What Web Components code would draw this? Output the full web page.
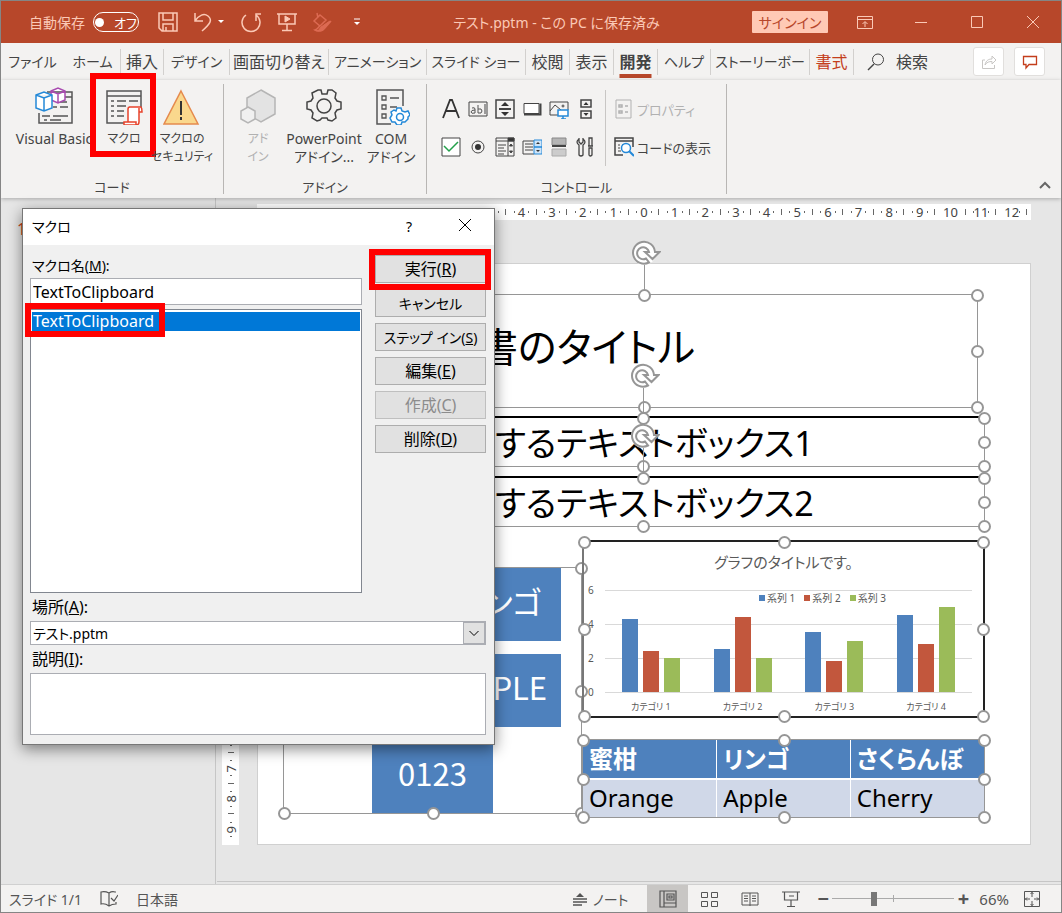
<!DOCTYPE html>
<html lang="ja">
<head>
<meta charset="utf-8">
<title>テスト.pptm</title>
<style>
  html, body { margin: 0; height: 100%; }
  body {
    font-family: "Noto Sans", "Noto Sans CJK JP", sans-serif;
    font-size: 14px;
    font-feature-settings: "palt";
    color: #444;
  }
</style>
</head>
<body>
<app-window>
  <title-bar slot="title" heading="テスト.pptm - この PC に保存済み"></title-bar>
  <ribbon-tabs slot="tabs"></ribbon-tabs>
  <ribbon-panel slot="ribbon">
    <ribbon-group label="コード" style="--columns: 84px 56px 60px; width: 222px">
      <ribbon-button icon="vb">Visual Basic</ribbon-button>
      <ribbon-button icon="macro" compact marked>マクロ</ribbon-button>
      <ribbon-button icon="warning" compact>マクロの<br>セキュリティ</ribbon-button>
    </ribbon-group>
    <ribbon-group label="アドイン" style="--columns: 42px 90px 44px; width: 202px">
      <ribbon-button icon="addin" compact disabled>アド<br>イン</ribbon-button>
      <ribbon-button icon="gear">PowerPoint<br>アドイン...</ribbon-button>
      <ribbon-button icon="com">COM<br>アドイン</ribbon-button>
    </ribbon-group>
    <ribbon-group label="コントロール" style="--columns: 1fr; width: 299px">
      <control-palette></control-palette>
    </ribbon-group>
  </ribbon-panel>
  <work-area slot="work"></work-area>
  <status-bar slot="status"></status-bar>
  <macro-dialog slot="dialog"></macro-dialog>
</app-window>

<script>
const ICONS = {
  save: [20, `<path d="M1 1h18v18H4l-3-3zM5 1v7h10V1M5 19v-7h10v7M8 19v-4" stroke-width="1.500"/>`],
  undo: [20, `<path d="M2 1v8h8M2 9C6 3 11 1 15 4c5 4 2 8-6 15" stroke-width="1.500"/>`],
  redo: [22, `<path d="M6 4a9 9 0 1 0 10 0M16 10V3h5" stroke-width="1.500"/>`],
  show: [20, `<path d="M0 2h20M2 2v10h16V2M10 12v6M5 18.500h10" stroke-width="1.500"/><path d="M8 4v6l5-3z" fill="currentColor"/>`],
  brush: [20, `<path d="M5 1l1 5M2 9l6-6 6 5-6 6zM9 16l8-6M8 14c-2 1-2 3-5 4 4 2 8 1 9-1l7-8" stroke-width="1.500"/><path d="M9 15l9-6-7 9-5 1z" fill="currentColor"/>`],
  more: [8, `<path d="M1 1h6" stroke="#fff"/><path d="M1 4h6l-3 3z" fill="#fff" stroke="none"/>`],
  caret: [8, `<path d="M1 2h6l-3 3z" fill="#fff" stroke="none"/>`],
  ribbonopt: [16, `<path d="M.5 2.500h15v12H.5zM.5 5.500h15M8 13V8M5.500 10L8 7.500l2.500 2.500"/>`],
  min: [14, `<path d="M1 7.500h12"/>`],
  max: [14, `<path d="M1.500 1.500h11v11h-11z"/>`],
  close: [14, `<path d="M1 1l12 12M13 1L1 13"/>`],
  search: [20, `<circle cx="12" cy="7.500" r="5.500"/><path d="M8 12l-6 6" stroke-width="1.500"/>`],
  share: [16, `<path d="M4 6H1.500v8.500h12V11M4 11c1-5 4-6 7-6V2l4 4-4 4V7.500C8 7.500 6 8 4 11z"/>`],
  comment: [16, `<path d="M1.500 2.500h13v8H7l-3 3.500v-3.500H1.500z" stroke-width="1.300"/>`],
  vb: [38, `<path d="M12 5h25v31H4V26M18 10h19M23 15h9M18 20h4M25 20h8M7 29h8M18 29h15M9 33h3M15 33h11" stroke="#555" stroke-width="1.500"/>
    <path d="M16 4l7-3 7 3v9l-7 3-7-3zM16 4l7 3 7-3M23 7v9" fill="#fff" stroke="#a84bb0" stroke-width="1.500"/>
    <path d="M1 8l8-3 8 3v13l-8 3-8-3zM1 8l8 3 8-3M9 11v13" fill="#fff" stroke="#2489d8" stroke-width="1.500"/>`],
  macro: [38, `<path d="M20 36H2V4h34v17M2 9h34" stroke="#555" stroke-width="1.500"/>
    <path d="M6 14h3M12 14h9M24 14h9M6 19h3M12 19h9M6 24h3M12 24h7M6 29h3M12 29h7" stroke="#555" stroke-width="1.300"/>
    <path d="M24 20h12q1 1 1 5h-3v10q0 3-3 3H19v-3h4V22q0-2 2-2M23 35h8v3M34 25v-4" fill="#fff" stroke="#e8432b" stroke-width="1.500"/>`],
  warning: [38, `<path d="M18 4l17 33H1z" fill="#fad88d" stroke="#e58a4d" stroke-width="1.500"/><path d="M18 14v14M18 30v3" stroke="#333" stroke-width="2"/>`],
  addin: [38, `<path d="M22 3l14 8v16l-14 8-14-8V11z" fill="#e3e3e3" stroke="#b5b5b5" stroke-width="1.500"/><path d="M9 20l7 4v8l-7 4-7-4v-8z" fill="#f0f0f0" stroke="#b5b5b5" stroke-width="1.500"/>`],
  gear: [38, `<path d="M13 3h3l1 4h5l1-4h4l4 3-1 5 2 3 4 1v7l-4 1-2 3 1 5-4 3-4-1-1-2h-5l-2 2-3 1-5-3 1-5-2-3-4-1v-7l4-1 2-3-1-5z" stroke="#444" stroke-width="1.500"/><circle cx="19" cy="19" r="7" stroke="#444" stroke-width="1.500"/>`],
  com: [38, `<path d="M19 37H5V3h26v16" stroke="#555" stroke-width="1.500"/><path d="M10 9h4v4h-4zM10 18h4v4h-4zM10 27h4v4h-4zM18 11h9M18 20h7" stroke="#555" stroke-width="1.300"/>
    <path d="M25 21h4l1 3 3 1 3-1 2 4-2 2 0 2-3 3-3 0-1 3h-4l-2-3-3 0-2-4 2-3-1-3 3-2 2 1z" fill="#fff" stroke="#2489d8" stroke-width="1.500"/><circle cx="28" cy="30" r="3.500" stroke="#2489d8" stroke-width="1.500"/>`],
  label: [20, `<path d="M2 19L9 1h2l7 18M5 12h10" stroke="#333" stroke-width="1.800"/>`],
  textbox: [20, `<path d="M1 3h18v14H1zM17 5v10"/><path d="M4 9q3-1 3 1v4q-4 1-4-1 0-2 4-2M10 6v8q4 1 4-2t-4-2" stroke="#555"/>`],
  spin: [20, `<path d="M1 1h18v18H1z" stroke-width="1.500"/><path d="M4 10h12" stroke-width="2"/><path d="M10 3l4 4H6zM10 17l4-4H6z" fill="#333" stroke="none"/>`],
  cmdbutton: [20, `<path d="M2 4.500h15v10H2z" fill="#fff"/><path d="M2 15.500h16.500V4.500" stroke-width="2"/>`],
  image: [20, `<path d="M9 16H1V3h18v8M1 12l5-6 6 5"/><circle cx="14" cy="7" r="1"/><path d="M9 11h10v6H9zM12 20h5M14 17v3" fill="#fff" stroke="#2489d8" stroke-width="1.500"/>`],
  scroll: [20, `<path d="M5 1h10v7H5zM5 12h10v7H5z" stroke-width="1.500"/><path d="M10 3l2.500 3h-5zM10 17l2.500-3h-5z" fill="#333" stroke="none"/>`],
  check: [20, `<path d="M1 1h18v18H1z" fill="#fff"/><path d="M3 9l5 5 9-9" stroke="#22a04a" stroke-width="1.500"/>`],
  radio: [20, `<circle cx="10" cy="10" r="6"/><circle cx="10" cy="10" r="3" fill="#333" stroke="none"/>`],
  listbox: [20, `<path d="M1 1h18v18H1zM1 4h18M13 4v15M3 8h8M3 11h6M3 14h8M3 17h6"/><path d="M13 1h6v3h-6zM14.500 9h3l-1.500-2zM14.500 14h3l-1.500 2z" fill="#333"/>`],
  combobox: [20, `<path d="M12 4H1v13h11M3 7h8M3 10h8M3 13h8"/><path d="M12 3h8v7h-8zM12 10h8v7h-8z" fill="#cfe5f8" stroke="#2489d8"/><path d="M16 5l2 2h-4zM16 15l2-2h-4z" fill="#333" stroke="none"/>`],
  toggle: [20, `<path d="M3 1h14v7H3z" fill="#b5b5b5" stroke="#888"/><path d="M3 9h14" stroke-width="2"/><path d="M3 12h14v7H3z" fill="#ccc" stroke="#aaa"/>`],
  tools: [20, `<path d="M3 1v4l2 2 2-2V1M3 2q-4 3 0 6v10q2 2 4 0V8q4-3 0-6M13 1h3v8h-3zM12 9h5M13 11v7q1 2 3 0v-7z" stroke-width="1.300"/>`],
  props: [20, `<path d="M2 1h15v18H2z"/><path d="M5 6h3v2H5zM5 12h3v2H5zM11 7h3M11 13h3" stroke-width="1.500"/>`],
  viewcode: [20, `<path d="M9 18H1V1h18v9M1 4h18" stroke="#444" stroke-width="1.500"/><path d="M4 8h2M8 8h3M4 11h2M4 14h3" stroke="#444"/><circle cx="12" cy="11" r="4.500" fill="#fff" stroke="#2489d8" stroke-width="1.500"/><path d="M15 14l5 5" stroke="#2489d8" stroke-width="2"/>`],
  up: [12, `<path d="M1 9l5-5 5 5" stroke-width="2"/>`],
  down: [12, `<path d="M1.500 4L6 8.500 10.500 4"/>`],
  proof: [18, `<path d="M9 3v13M9 3Q5 1 1 2v12q4-1 8 2M9 3q3-2 6-1h1M9 16q3-2 7-2v-2M11 8l3 3 4-6" stroke-width="1.200"/>`],
  notes: [14, `<path d="M7 1l4 4H3z" fill="currentColor" stroke="none"/><path d="M0 7h14M0 10h14M0 13h9" stroke-width="1.300"/>`],
  normal: [18, `<path d="M1 1h16v16H1zM5 1v16M5 13h12M8 4h7v6H8zM10 6h3v2h-3z" stroke-width="1.200"/>`],
  sorter: [18, `<path d="M1.500 2.500h6v5h-6zM11.500 2.500h6v5h-6zM1.500 11.500h6v5h-6zM11.500 11.500h6v5h-6z"/>`],
  reading: [18, `<path d="M9 3v13M9 3H1v12h8M9 3h8v12H9M3 6h4M3 8.500h4M3 11h4M11 6h4M11 8.500h4M11 11h4"/>`],
  present: [18, `<path d="M0 2h18M2.500 2v8h13V2M9 10v6M5 16.500h8M7 6h5" stroke-width="1.200"/>`],
  fit: [18, `<path d="M1.500 1.500h15v15h-15zM9 2v5M9 11v5M2 9h5M11 9h5M7.500 4L9 2.500 10.500 4M7.500 14L9 15.500l1.500-1.500M4 7.500L2.500 9 4 10.500M14 7.500L15.500 9 14 10.500"/>`],
  rotate: [30, `<circle cx="13" cy="15" r="12" fill="#fff" stroke="none"/><path d="M24 14a11 11 0 1 0-6 10.500l-3-4a6 6 0 1 1 3-6.500h-4l7.500 7 7-7z" fill="#fff" stroke="#969696" stroke-width="2"/>`],
};

class BaseElement extends HTMLElement {
  constructor() {
    super();
    this.attachShadow({ mode: "open" });
    this.shadowRoot.append(this.constructor.template.content.cloneNode(true));
  }

  static define(name, html) {
    this.template = document.createElement("template");
    this.template.innerHTML = html;
    customElements.define(name, this);
  }
}

class UiIcon extends BaseElement {
  static observedAttributes = ["name"];

  attributeChangedCallback() {
    const [size, shapes] = ICONS[this.getAttribute("name")];
    this.shadowRoot.querySelector("div").innerHTML =
      `<svg width="${size}" height="${size}" viewBox="0 0 ${size} ${size}" fill="none" stroke="currentColor" aria-hidden="true">${shapes}</svg>`;
  }
}
UiIcon.define("ui-icon", `
  <style>
    :host { display: inline-flex; flex: none; }
    svg { display: block; }
  </style>
  <div></div>
`);

class AppWindow extends BaseElement {}
AppWindow.define("app-window", `
  <style>
    :host {
      display: flex;
      flex-direction: column;
      position: relative;
      box-sizing: border-box;
      min-height: 100vh;
      border: 1px solid #858585;
      background: #f3f2f1;
      overflow: hidden;
    }
    main { flex: 1; display: grid; }
  </style>
  <slot name="title"></slot>
  <slot name="tabs"></slot>
  <slot name="ribbon"></slot>
  <main><slot name="work"></slot></main>
  <slot name="status"></slot>
  <slot name="dialog"></slot>
`);

class TitleBar extends BaseElement {
  connectedCallback() {
    this.shadowRoot.querySelector("h1").textContent = this.getAttribute("heading");
  }
}
TitleBar.define("title-bar", `
  <style>
    :host {
      display: flex;
      align-items: center;
      height: 42px;
      background: #b7472a;
      color: #fbc9b6;
    }
    button {
      display: inline-flex;
      align-items: center;
      justify-content: center;
      border: 0;
      padding: 0;
      background: none;
      color: inherit;
      font: inherit;
    }
    .autosave { display: flex; align-items: center; gap: 8px; padding-left: 28px; }
    .switch {
      gap: 10px;
      box-sizing: border-box;
      width: 46px;
      height: 20px;
      border: 1px solid #fff;
      border-radius: 10px;
      color: #fff;
      font-size: 13px;
    }
    .switch i { width: 9px; height: 9px; border-radius: 50%; background: #fff; }
    .quick { display: flex; align-items: center; gap: 15px; padding-left: 19px; }
    .quick .split { gap: 4px; }
    .quick button:last-child { margin-left: 6px; }
    .dim { color: #dc6a52; }
    h1 { flex: 1; margin: 0; font-size: 14px; font-weight: 400; text-align: center; white-space: nowrap; }
    .signin {
      width: 76px;
      height: 22px;
      background: #ffc9b5;
      color: #b7472a;
      border-radius: 1px;
    }
    .window { display: flex; gap: 16px; padding: 0 8px 0 17px; }
    .window button { width: 40px; height: 32px; }
  </style>
  <div class="autosave">
    <span id="save">自動保存</span>
    <button class="switch" role="switch" aria-checked="false" aria-labelledby="save"><i></i>オフ</button>
  </div>
  <div class="quick">
    <button aria-label="上書き保存"><ui-icon name="save"></ui-icon></button>
    <button class="split" aria-label="元に戻す"><ui-icon name="undo"></ui-icon><ui-icon name="caret"></ui-icon></button>
    <button aria-label="やり直し"><ui-icon name="redo"></ui-icon></button>
    <button aria-label="最初から開始"><ui-icon name="show"></ui-icon></button>
    <button class="dim" aria-label="書式"><ui-icon name="brush"></ui-icon></button>
    <button aria-label="カスタマイズ"><ui-icon name="more"></ui-icon></button>
  </div>
  <h1></h1>
  <button class="signin">サインイン</button>
  <div class="window">
    <button aria-label="リボンの表示オプション"><ui-icon name="ribbonopt"></ui-icon></button>
    <button aria-label="最小化"><ui-icon name="min"></ui-icon></button>
    <button aria-label="最大化"><ui-icon name="max"></ui-icon></button>
    <button aria-label="閉じる"><ui-icon name="close"></ui-icon></button>
  </div>
`);

class RibbonTabs extends BaseElement {}
RibbonTabs.define("ribbon-tabs", `
  <style>
    :host { display: flex; align-items: center; height: 37px; padding-right: 16px; }
    nav {
      display: grid;
      grid-template-columns: 64px 56px 43px 66px 99px 98px 99px 44px 44px 44px 53px 99px 44px;
      height: 26px;
    }
    a {
      display: flex;
      align-items: center;
      justify-content: center;
      border-right: 1px solid #d2d0ce;
      color: #444;
      font-size: 14px;
      line-height: 24px;
      text-decoration: none;
      white-space: nowrap;
    }
    a:first-child { border-color: transparent; }
    a.kanji { font-size: 16px; }
    a[aria-current] { font-weight: 700; text-decoration: underline 4px #b7472a; text-underline-offset: 6px; }
    a.context { color: #c43e1c; }
    .search {
      display: flex;
      align-items: center;
      gap: 10px;
      flex: 1;
      padding-left: 12px;
      border: 0;
      background: none;
      color: #444;
      font: inherit;
      font-size: 16px;
      line-height: 24px;
    }
    .side { display: flex; gap: 10px; }
    .side button {
      display: grid;
      place-items: center;
      width: 31px;
      height: 29px;
      padding: 0;
      border: 1px solid #e1dfdd;
      border-radius: 3px;
      background: #fff;
      color: #c43e1c;
    }
    .side button:disabled { color: #c8c6c4; }
  </style>
  <nav>
    <a href="#file">ファイル</a>
    <a href="#home">ホーム</a>
    <a href="#insert" class="kanji">挿入</a>
    <a href="#design">デザイン</a>
    <a href="#transitions" class="kanji">画面切り替え</a>
    <a href="#animations">アニメーション</a>
    <a href="#slideshow">スライド ショー</a>
    <a href="#review" class="kanji">校閲</a>
    <a href="#view" class="kanji">表示</a>
    <a href="#developer" class="kanji" aria-current="page">開発</a>
    <a href="#help">ヘルプ</a>
    <a href="#storyboard">ストーリーボー</a>
    <a href="#format" class="kanji context">書式</a>
  </nav>
  <button class="search"><ui-icon name="search"></ui-icon>検索</button>
  <div class="side">
    <button disabled aria-label="共有"><ui-icon name="share"></ui-icon></button>
    <button aria-label="コメント"><ui-icon name="comment"></ui-icon></button>
  </div>
`);

class RibbonPanel extends BaseElement {}
RibbonPanel.define("ribbon-panel", `
  <style>
    :host {
      display: flex;
      height: 118px;
      position: relative;
      z-index: 1;
      box-shadow: 0 1px 4px #0004;
    }
    .collapse {
      margin: auto 10px 4px auto;
      padding: 0;
      border: 0;
      background: none;
      color: #666;
    }
  </style>
  <slot></slot>
  <button class="collapse" aria-label="リボンを折りたたむ"><ui-icon name="up"></ui-icon></button>
`);

class RibbonGroup extends BaseElement {
  connectedCallback() {
    this.shadowRoot.querySelector("footer").textContent = this.getAttribute("label");
  }
}
RibbonGroup.define("ribbon-group", `
  <style>
    :host {
      display: flex;
      flex-direction: column;
      margin: 4px 0;
      border-right: 1px solid #b8b6b4;
    }
    section {
      display: grid;
      grid-template-columns: var(--columns);
      justify-content: center;
      flex: 1;
    }
    footer { font-size: 13px; line-height: 14px; text-align: center; }
  </style>
  <section><slot></slot></section>
  <footer></footer>
`);

class RibbonButton extends BaseElement {
  connectedCallback() {
    this.shadowRoot.querySelector("ui-icon").setAttribute("name", this.getAttribute("icon"));
    this.shadowRoot.querySelector("button").disabled = this.hasAttribute("disabled");
  }
}
RibbonButton.define("ribbon-button", `
  <style>
    :host { display: block; position: relative; }
    button {
      display: flex;
      flex-direction: column;
      align-items: center;
      gap: 5px;
      width: 100%;
      padding: 3px 0 0;
      border: 0;
      background: none;
      color: #444;
      font: inherit;
      line-height: 18px;
    }
    span { white-space: nowrap; }
    :host([compact]) button { font-size: 12px; }
    button:disabled { color: #b1b1b1; }
    .mark { display: none; }
    /* red frame that points at the command to press */
    :host([marked]) .mark {
      display: block;
      position: absolute;
      inset: -11px -4px 23px -6px;
      border: 6px solid #f00;
    }
  </style>
  <button><ui-icon></ui-icon><span><slot></slot></span></button>
  <div class="mark"></div>
`);

class ControlPalette extends BaseElement {}
ControlPalette.define("control-palette", `
  <style>
    :host { display: flex; align-items: flex-start; padding: 6px 0 0 10px; }
    button { display: flex; align-items: center; border: 0; padding: 0; background: none; color: #444; font: inherit; font-size: 13px; }
    .tools { display: grid; grid-template-columns: repeat(6, 27px); grid-auto-rows: 38px; }
    .tools button { justify-content: center; }
    .side {
      display: grid;
      grid-auto-rows: 38px;
      border-left: 1px solid #c8c6c4;
      margin-left: 6px;
      padding-left: 8px;
    }
    .side button { gap: 3px; white-space: nowrap; }
    button:disabled { color: #b1b1b1; }
  </style>
  <div class="tools">
    <button aria-label="ラベル"><ui-icon name="label"></ui-icon></button>
    <button aria-label="テキスト ボックス"><ui-icon name="textbox"></ui-icon></button>
    <button aria-label="スピン"><ui-icon name="spin"></ui-icon></button>
    <button aria-label="コマンド"><ui-icon name="cmdbutton"></ui-icon></button>
    <button aria-label="イメージ"><ui-icon name="image"></ui-icon></button>
    <button aria-label="スクロール バー"><ui-icon name="scroll"></ui-icon></button>
    <button aria-label="チェック ボックス"><ui-icon name="check"></ui-icon></button>
    <button aria-label="オプション"><ui-icon name="radio"></ui-icon></button>
    <button aria-label="リスト ボックス"><ui-icon name="listbox"></ui-icon></button>
    <button aria-label="コンボ ボックス"><ui-icon name="combobox"></ui-icon></button>
    <button aria-label="トグル"><ui-icon name="toggle"></ui-icon></button>
    <button aria-label="その他"><ui-icon name="tools"></ui-icon></button>
  </div>
  <div class="side">
    <button disabled><ui-icon name="props"></ui-icon>プロパティ</button>
    <button><ui-icon name="viewcode"></ui-icon>コードの表示</button>
  </div>
`);

class RulerScale extends BaseElement {
  connectedCallback() {
    const max = Number(this.getAttribute("max"));
    for (let n = -max; n <= max; n++) {
      const cell = document.createElement("div");
      cell.innerHTML = `<span>${Math.abs(n)}</span>`;
      this.shadowRoot.append(cell);
    }
  }
}
RulerScale.define("ruler-scale", `
  <style>
    :host {
      --tick: linear-gradient(#666, #666);
      display: flex;
      padding: 0 4px;
      background: #fff;
      color: #444;
      font-size: 13px;
      line-height: 16px;
    }
    div {
      display: flex;
      flex: 1;
      align-items: center;
      justify-content: center;
      min-width: 0;
      background:
        var(--tick) 25% 50% / 1px 2px no-repeat,
        var(--tick) 75% 50% / 1px 2px no-repeat,
        var(--tick) 100% 50% / 1px 6px no-repeat;
    }
    span { background: #fff; }
    :host([vertical]) { flex-direction: column; padding: 0; }
    :host([vertical]) div {
      min-height: 0;
      background:
        var(--tick) 50% 25% / 2px 1px no-repeat,
        var(--tick) 50% 75% / 2px 1px no-repeat,
        var(--tick) 50% 100% / 6px 1px no-repeat;
    }
    :host([vertical]) div:last-child { background-size: 2px 1px, 2px 1px, 0 0; }
    :host([vertical]) span { writing-mode: vertical-rl; transform: rotate(180deg); }
  </style>
`);

class SlideFrame extends BaseElement {}
SlideFrame.define("slide-frame", `
  <style>
    :host { display: block; position: absolute; box-sizing: border-box; border: 1px solid #969696; }
    .h {
      position: absolute;
      box-sizing: border-box;
      width: 13px;
      height: 13px;
      margin: -6px;
      border: 2px solid #969696;
      border-radius: 50%;
      background: #fff;
    }
    .n { left: 50%; top: 0; }
    .s { left: 50%; top: 100%; }
    .e { left: 100%; top: 50%; }
    .w { left: 0; top: 50%; }
    .nw { left: 0; top: 0; }
    .ne { left: 100%; top: 0; }
    .sw { left: 0; top: 100%; }
    .se { left: 100%; top: 100%; }
    .rotate { display: none; }
    :host([rotatable]) .rotate {
      display: flex;
      flex-direction: column;
      align-items: center;
      position: absolute;
      left: 50%;
      bottom: 100%;
      width: 26px;
      margin-left: -13px;
    }
    .rotate ui-icon { align-self: flex-start; }
    .rotate i { width: 1px; height: 30px; margin-top: -3px; background: #969696; }
  </style>
  <slot></slot>
  <div class="rotate"><ui-icon name="rotate"></ui-icon><i></i></div>
  <i class="h nw"></i><i class="h n"></i><i class="h ne"></i><i class="h e"></i>
  <i class="h se"></i><i class="h s"></i><i class="h sw"></i><i class="h w"></i>
`);

class BarChart extends BaseElement {
  data = [
    ["カテゴリ 1", 4.3, 2.4, 2],
    ["カテゴリ 2", 2.5, 4.4, 2],
    ["カテゴリ 3", 3.5, 1.8, 3],
    ["カテゴリ 4", 4.5, 2.8, 5],
  ];

  connectedCallback() {
    const plot = this.shadowRoot.querySelector(".plot");
    const names = this.shadowRoot.querySelector(".names");
    this.data.forEach(([name, ...values]) => {
      const group = document.createElement("div");
      values.forEach((value, i) => {
        const bar = document.createElement("i");
        bar.className = "s" + (i + 1);
        bar.style.height = Math.round(value * 17) + "px";
        group.append(bar);
      });
      plot.append(group);
      const label = document.createElement("span");
      label.textContent = name;
      names.append(label);
    });
  }
}
BarChart.define("bar-chart", `
  <style>
    :host { display: block; color: #595959; font-size: 9px; }
    h2 { margin: 0; padding: 8px 0 16px; font-size: 15px; line-height: 24px; font-weight: 400; text-align: center; }
    .area { display: grid; grid-template-columns: 21px 1fr; padding-right: 11px; }
    .axis { display: flex; flex-direction: column; line-height: 34px; margin: -17px 0; padding-left: 4px; font-size: 10px; }
    .plot {
      display: flex;
      position: relative;
      height: 102px;
      border-bottom: 1px solid #d9d9d9;
      background: repeating-linear-gradient(#d9d9d9 0 1px, transparent 1px 34px);
    }
    .plot div { flex: 1; display: flex; align-items: flex-end; justify-content: center; gap: 5px; }
    .plot i { width: 16px; }
    .s1 { background: #4e81bd; }
    .s2 { background: #c2573d; }
    .s3 { background: #9bbb59; }
    .legend {
      display: flex;
      gap: 9px;
      position: absolute;
      right: 86px;
      top: 1px;
      margin: 0;
      font-size: 10px;
      line-height: 14px;
    }
    .legend span { display: flex; align-items: center; gap: 2px; }
    .legend i { width: 6px; height: 6px; }
    .names { grid-column: 2; display: flex; line-height: 28px; text-align: center; }
    .names span { flex: 1; }
  </style>
  <h2>グラフのタイトルです。</h2>
  <div class="area">
    <div class="axis"><span>6</span><span>4</span><span>2</span><span>0</span></div>
    <div class="plot">
      <p class="legend">
        <span><i class="s1"></i>系列 1</span><span><i class="s2"></i>系列 2</span><span><i class="s3"></i>系列 3</span>
      </p>
    </div>
    <div class="names"></div>
  </div>
`);

class WorkArea extends BaseElement {}
WorkArea.define("work-area", `
  <style>
    :host { display: grid; grid-template-columns: 215px 1fr; background: #e6e6e6; }
    aside { padding: 20px 16px; border-right: 1px solid #c6c6c6; color: #c43e1c; font-size: 16px; }
    .canvas {
      display: grid;
      grid-template-columns: 17px 1fr;
      grid-template-rows: 16px auto;
      align-content: start;
      gap: 43px 18px;
      margin: 0 0 2px 1px;
      padding: 6px 30px 36px 5px;
      border-bottom: 1px solid #c6c6c6;
    }
    .canvas > ruler-scale:first-child { grid-column: 2; }
    .slide {
      position: relative;
      box-sizing: border-box;
      aspect-ratio: 133 / 100;
      border: 1px solid #d0d0d0;
      background: #fff;
      color: #000;
    }
    .title { left: 52px; right: 52px; top: 30px; height: 114px; }
    .title p { margin: 0; padding: 20px 0 0 167px; font-size: 40px; line-height: 64px; white-space: nowrap; }
    .box { left: 43px; right: 45px; height: 51px; border-top: 2px solid #000; }
    .box p { margin: 0; padding-left: 193px; font-size: 34px; line-height: 50px; white-space: nowrap; }
    .box.a { top: 152px; }
    .box.b { top: 212px; }
    .art { left: 25px; right: 448px; top: 303px; height: 247px; }
    .art span {
      position: absolute;
      display: grid;
      place-items: center;
      box-sizing: border-box;
      width: 121px;
      height: 73px;
      padding-bottom: 8px;
      background: #4e81bd;
      color: #fff;
      font-family: "Noto Sans CJK JP", sans-serif;
      font-size: 31px;
    }
    .upper { right: 20px; top: 0; }
    .middle { right: 20px; top: 86px; }
    .lower { right: 88px; bottom: 0; }
    .chart { left: 324px; right: 45px; top: 276px; height: 178px; border: 2px solid #222; border-left-color: #777; }
    .grid { left: 324px; right: 45px; top: 475px; height: 79px; }
    table { width: 100%; height: 100%; border-collapse: collapse; table-layout: fixed; }
    th, td { padding: 0 0 0 6px; font-size: 24px; line-height: 34px; text-align: left; }
    th { background: #4e81bd; color: #fff; border-bottom: 2px solid #fff; }
    td { background: #d0d8e8; }
    th + th, td + td { border-left: 1px solid #fff; }
  </style>
  <aside>1</aside>
  <div class="canvas">
    <ruler-scale max="12"></ruler-scale>
    <ruler-scale max="9" vertical></ruler-scale>
    <div class="slide">
      <slide-frame class="title" rotatable><p>書のタイトル</p></slide-frame>
      <slide-frame class="box a" rotatable><p>するテキストボックス1</p></slide-frame>
      <slide-frame class="box b" rotatable><p>するテキストボックス2</p></slide-frame>
      <slide-frame class="art">
        <span class="upper">リンゴ</span>
        <span class="middle">APPLE</span>
        <span class="lower">0123</span>
      </slide-frame>
      <slide-frame class="chart"><bar-chart></bar-chart></slide-frame>
      <slide-frame class="grid">
        <table>
          <tr><th>蜜柑</th><th>リンゴ</th><th>さくらんぼ</th></tr>
          <tr><td>Orange</td><td>Apple</td><td>Cherry</td></tr>
        </table>
      </slide-frame>
    </div>
  </div>
`);

class StatusBar extends BaseElement {}
StatusBar.define("status-bar", `
  <style>
    :host { display: flex; align-items: center; height: 27px; padding: 0 20px 0 8px; border-top: 1px solid #d0d0d0; color: #555; }
    button {
      display: flex;
      align-items: center;
      justify-content: center;
      gap: 6px;
      height: 27px;
      padding: 0;
      border: 0;
      background: none;
      color: #555;
      font: inherit;
    }
    .left { display: flex; align-items: center; gap: 18px; flex: 1; }
    .views { display: flex; margin-left: 19px; }
    .views button { width: 41px; }
    .views [aria-pressed=true] { background: #c8c6c4; }
    .zoom { display: flex; align-items: center; gap: 3px; margin: 0 10px 0 6px; }
    .zoom button { width: 12px; font-size: 20px; font-weight: 700; }
    input {
      appearance: none;
      width: 122px;
      height: 14px;
      margin: 0;
      background:
        linear-gradient(#aaa, #aaa) 50% 50% / 1px 7px no-repeat,
        linear-gradient(#aaa, #aaa) 0 50% / 100% 1px no-repeat;
    }
    input::-webkit-slider-thumb { appearance: none; width: 6px; height: 14px; background: #777; }
    output { margin-right: 14px; font-size: 15px; }
  </style>
  <div class="left"><span>スライド 1/1</span><ui-icon name="proof"></ui-icon><span>日本語</span></div>
  <button><ui-icon name="notes"></ui-icon>ノート</button>
  <div class="views">
    <button aria-pressed="true" aria-label="標準"><ui-icon name="normal"></ui-icon></button>
    <button aria-label="スライド一覧"><ui-icon name="sorter"></ui-icon></button>
    <button aria-label="閲覧表示"><ui-icon name="reading"></ui-icon></button>
    <button aria-label="スライド ショー"><ui-icon name="present"></ui-icon></button>
  </div>
  <div class="zoom">
    <button aria-label="縮小">−</button>
    <input type="range" min="0" max="200" value="66" aria-label="ズーム">
    <button aria-label="拡大">+</button>
  </div>
  <output>66%</output>
  <button aria-label="ウィンドウに合わせる"><ui-icon name="fit"></ui-icon></button>
`);

class MacroDialog extends BaseElement {}
MacroDialog.define("macro-dialog", `
  <style>
    :host {
      display: block;
      position: absolute;
      left: 21px;
      top: 207px;
      z-index: 2;
      width: 471px;
      border: 1px solid #777;
      background: #f0f0f0;
      box-shadow: 0 4px 14px #0007;
      color: #000;
      font-size: 14px;
    }
    header { display: flex; align-items: center; height: 36px; padding: 0 15px 0 9px; background: #fff; line-height: 18px; }
    header span { flex: 1; }
    header button { border: 0; background: none; color: #000; font: inherit; width: 28px; padding: 0; margin-left: 28px; }
    form { padding: 9px 8px 9px 7px; }
    .top { display: grid; grid-template-columns: 1fr 111px; gap: 13px; }
    label { display: block; line-height: 24px; padding-left: 2px; }
    input, textarea, select, ul {
      display: block;
      box-sizing: border-box;
      width: 100%;
      margin: 0;
      padding: 0 2px;
      border: 1px solid #abadb3;
      border-radius: 0;
      background: #fff;
      color: #000;
      font: inherit;
      font-size: 16px;
    }
    input { height: 27px; }
    ul { height: 284px; margin-top: 4px; padding: 2px 1px; border-color: #828790; list-style: none; }
    li { padding-left: 1px; line-height: 19px; background: #0078d7; color: #fff; }
    .combo { position: relative; }
    select { appearance: none; height: 24px; font-size: 14px; }
    .combo span {
      position: absolute;
      right: 1px;
      top: 1px;
      display: grid;
      place-items: center;
      width: 20px;
      height: 20px;
      border: 1px solid #abadb3;
      background: #e1e1e1;
      pointer-events: none;
    }
    textarea { height: 62px; resize: none; }
    .bottom label { font-size: 16px; line-height: 28px; }
    .actions { display: flex; flex-direction: column; gap: 6px; padding-top: 1px; }
    .actions button {
      height: 28px;
      padding: 0;
      border: 1px solid #adadad;
      background: #e1e1e1;
      color: #000;
      font: inherit;
    }
    .actions .kanji { font-size: 16px; line-height: 24px; }
    .actions button:disabled { color: #8c8c8c; border-color: #bfbfbf; }
    .mark { position: absolute; border: 6px solid #f00; pointer-events: none; }
    .run { right: 3px; top: 40px; width: 110px; height: 29px; }
    .item { left: 2px; top: 94px; width: 128px; height: 22px; }
  </style>
  <header>
    <span>マクロ</span>
    <button aria-label="ヘルプ">?</button>
    <button aria-label="閉じる"><ui-icon name="close"></ui-icon></button>
  </header>
  <form>
    <div class="top">
      <div>
        <label for="name">マクロ名(<u>M</u>):</label>
        <input id="name" value="TextToClipboard">
        <ul role="listbox" aria-label="マクロ"><li role="option" aria-selected="true">TextToClipboard</li></ul>
      </div>
      <div class="actions">
        <button type="button" class="kanji">実行(<u>R</u>)</button>
        <button type="button">キャンセル</button>
        <button type="button">ステップ イン(<u>S</u>)</button>
        <button type="button" class="kanji">編集(<u>E</u>)</button>
        <button type="button" class="kanji" disabled>作成(<u>C</u>)</button>
        <button type="button" class="kanji">削除(<u>D</u>)</button>
      </div>
    </div>
    <div class="bottom">
      <label for="place">場所(<u>A</u>):</label>
      <div class="combo">
        <select id="place"><option>テスト.pptm</option></select>
        <span><ui-icon name="down"></ui-icon></span>
      </div>
      <label for="note">説明(<u>I</u>):</label>
      <textarea id="note"></textarea>
    </div>
  </form>
  <div class="mark run"></div>
  <div class="mark item"></div>
`);
</script>
</body>
</html>
